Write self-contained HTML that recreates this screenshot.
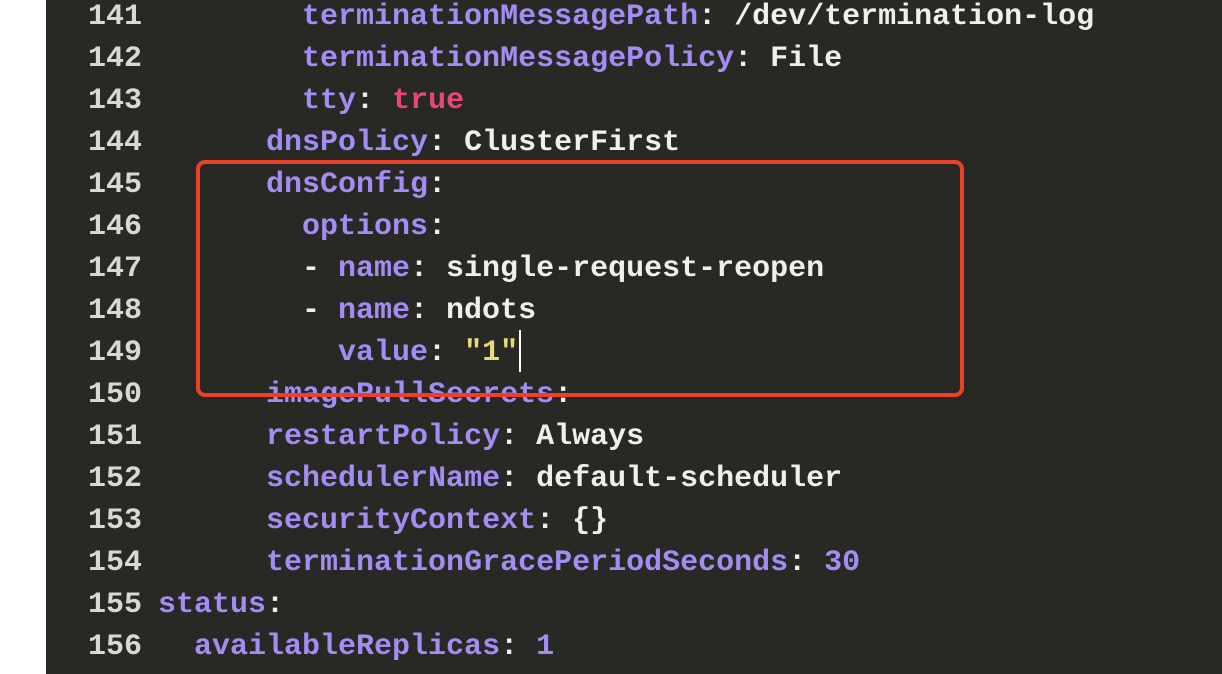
<!DOCTYPE html>
<html><head><meta charset="utf-8"><style>
html,body{margin:0;padding:0;width:1222px;height:674px;overflow:hidden;background:#fff}
#ed{position:absolute;left:46px;top:0;width:1176px;height:674px;background:#282825}
.l{position:absolute;left:0;height:42px;line-height:42px;font-family:"Liberation Mono",monospace;font-size:30px;font-weight:bold;white-space:pre;color:#f0f0ea}
.n{position:absolute;left:82px;width:60px;text-align:right;color:#d8d8d4}
.c{position:absolute;left:158px}
.k{color:#a58cf2}.p{color:#e8457a}.s{color:#e6db74}.w{color:#f0f0ea}
#box{position:absolute;left:196px;top:160px;width:760px;height:229px;border:4px solid #ee4027;border-radius:9px}
#cur{position:absolute;left:519px;top:330px;width:2px;height:42px;background:#fff}
</style></head><body>
<div id="ed"></div>
<div style="position:absolute;left:0;top:-4px;width:1222px">
<div class="l" style="top:0"><span class="n">141</span><span class="c">        <span class="k">terminationMessagePath</span>: /dev/termination-log</span></div>
<div class="l" style="top:42px"><span class="n">142</span><span class="c">        <span class="k">terminationMessagePolicy</span>: File</span></div>
<div class="l" style="top:84px"><span class="n">143</span><span class="c">        <span class="k">tty</span>: <span class="p">true</span></span></div>
<div class="l" style="top:126px"><span class="n">144</span><span class="c">      <span class="k">dnsPolicy</span>: ClusterFirst</span></div>
<div class="l" style="top:168px"><span class="n">145</span><span class="c">      <span class="k">dnsConfig</span>:</span></div>
<div class="l" style="top:210px"><span class="n">146</span><span class="c">        <span class="k">options</span>:</span></div>
<div class="l" style="top:252px"><span class="n">147</span><span class="c">        - <span class="k">name</span>: single-request-reopen</span></div>
<div class="l" style="top:294px"><span class="n">148</span><span class="c">        - <span class="k">name</span>: ndots</span></div>
<div class="l" style="top:336px"><span class="n">149</span><span class="c">          <span class="k">value</span>: <span class="s">"1"</span></span></div>
<div class="l" style="top:378px"><span class="n">150</span><span class="c">      <span class="k">imagePullSecrets</span>:</span></div>
<div class="l" style="top:420px"><span class="n">151</span><span class="c">      <span class="k">restartPolicy</span>: Always</span></div>
<div class="l" style="top:462px"><span class="n">152</span><span class="c">      <span class="k">schedulerName</span>: default-scheduler</span></div>
<div class="l" style="top:504px"><span class="n">153</span><span class="c">      <span class="k">securityContext</span>: {}</span></div>
<div class="l" style="top:546px"><span class="n">154</span><span class="c">      <span class="k">terminationGracePeriodSeconds</span>: <span class="k">30</span></span></div>
<div class="l" style="top:588px"><span class="n">155</span><span class="c"><span class="k">status</span>:</span></div>
<div class="l" style="top:630px"><span class="n">156</span><span class="c">  <span class="k">availableReplicas</span>: <span class="k">1</span></span></div>
</div>
<div id="box"></div>
<div id="cur"></div>
</body></html>
